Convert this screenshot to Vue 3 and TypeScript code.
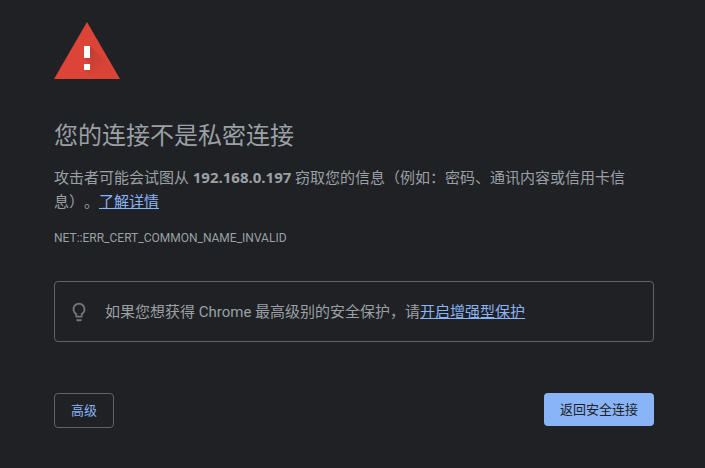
<script setup lang="ts">
const host: string = '192.168.0.197'
const errorCode: string = 'NET::ERR_CERT_COMMON_NAME_INVALID'
</script>

<template>
  <main class="interstitial">
    <svg class="warning" viewBox="0 0 66 57" aria-hidden="true">
      <defs>
        <linearGradient id="shade" gradientUnits="userSpaceOnUse" x1="33" y1="28" x2="48" y2="48">
          <stop offset="0" stop-color="#3e2723" stop-opacity="0.2" />
          <stop offset="1" stop-color="#3e2723" stop-opacity="0.01" />
        </linearGradient>
      </defs>
      <path d="M33 0 66 57H0Z" fill="#db4437" />
      <path d="M36 24 55 43 63 57H39L30 48 36 42 30 36Z" fill="url(#shade)" />
      <path d="M30 24h6v12h-6zM30 42h6v6h-6z" fill="#fff" />
    </svg>
    <h1>您的连接不是私密连接</h1>
    <p class="message">
      攻击者可能会试图从 <strong>{{ host }}</strong> 窃取您的信息（例如：密码、通讯内容或信用卡信息）。<a href="#">了解详情</a>
    </p>
    <div class="code">{{ errorCode }}</div>
    <div class="promo">
      <svg class="bulb" viewBox="0 0 24 24" aria-hidden="true">
        <path
          fill="#757575"
          d="M9 21c0 .55.45 1 1 1h4c.55 0 1-.45 1-1v-1H9v1zm3-19C8.140 2 5 5.140 5 9c0 2.380 1.190 4.470 3 5.740V17c0 .55.45 1 1 1h6c.55 0 1-.45 1-1v-2.260c1.810-1.270 3-3.360 3-5.740 0-3.860-3.140-7-7-7zm2.850 11.100-.85.6V16h-4v-2.300l-.85-.6C7.800 12.160 7 10.630 7 9c0-2.760 2.240-5 5-5s5 2.240 5 5c0 1.630-.8 3.160-2.150 4.100z"
        />
      </svg>
      <span>如果您想获得 Chrome 最高级别的安全保护，请<a href="#">开启增强型保护</a></span>
    </div>
    <div class="actions">
      <button type="button" class="secondary">高级</button>
      <button type="button" class="primary">返回安全连接</button>
    </div>
  </main>
</template>

<style>
body {
  background: #202124;
}
</style>

<style scoped>
.interstitial {
  box-sizing: border-box;
  max-width: 720px;
  margin: 0 auto;
  padding: 22px 51px 40px 54px;
  color: #9aa0a6;
  font: 15px/24px Roboto, "Noto Sans CJK SC", sans-serif;
  text-spacing-trim: space-all;
}
.warning {
  display: block;
  width: 66px;
  height: 57px;
}
h1 {
  margin: 39px 0 11px;
  font-size: 24px;
  font-weight: 400;
  line-height: 36px;
}
.message {
  margin: 0;
}
strong {
  font-family: "Open Sans", sans-serif;
}
a {
  color: #8ab4f8;
}
.code {
  margin-top: 16px;
  font-size: 12px;
  line-height: 16px;
}
.promo {
  display: flex;
  align-items: center;
  gap: 15px;
  box-sizing: border-box;
  min-height: 61px;
  margin-top: 35px;
  padding: 12px 13px;
  border: 1px solid #5f6368;
  border-radius: 4px;
}
.bulb {
  flex: none;
  width: 22px;
  height: 22px;
}
.actions {
  display: flex;
  justify-content: space-between;
  align-items: flex-start;
  margin-top: 51px;
}
button {
  border: 1px solid #5f6368;
  border-radius: 4px;
  padding: 8px 16px;
  background: transparent;
  color: #8ab4f8;
  font: 13px/17px Roboto, "Noto Sans CJK SC", sans-serif;
  cursor: pointer;
}
.primary {
  border: 0;
  background: #8ab4f8;
  color: #202124;
}
</style>
